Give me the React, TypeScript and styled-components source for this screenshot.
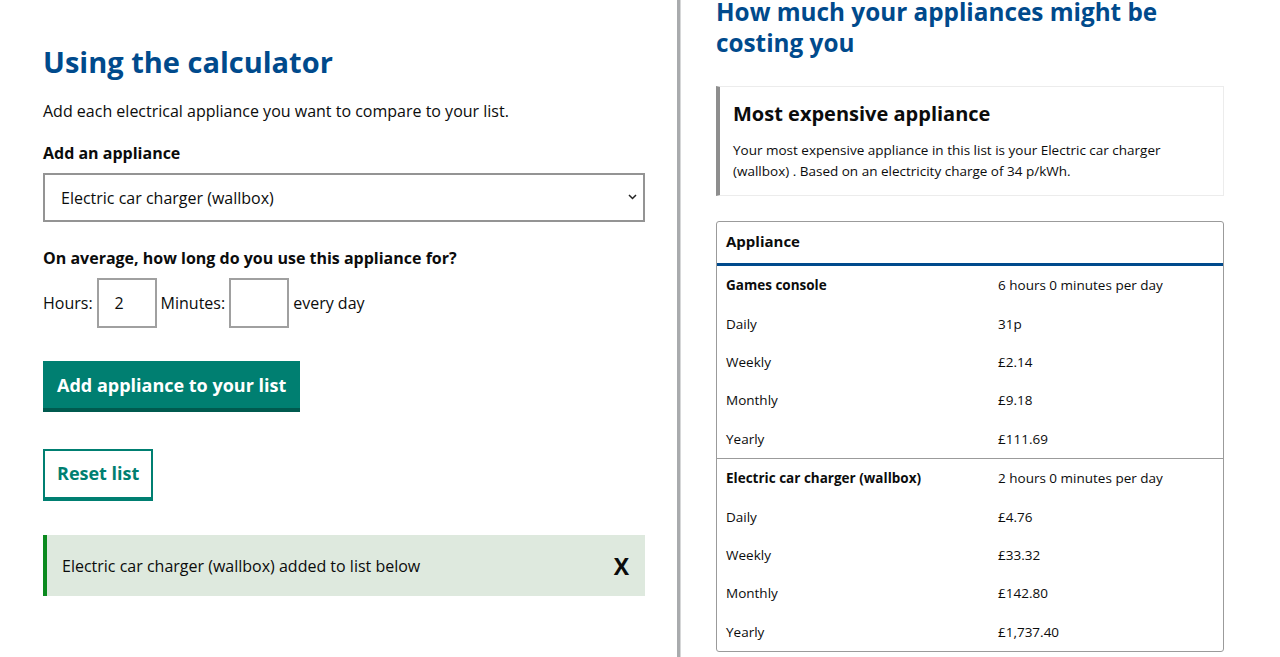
import React from "react";
import styled, { createGlobalStyle } from "styled-components";

const Global = createGlobalStyle`
  html, body { margin: 0; padding: 0; background: #fff; overflow: hidden; }
  body { font-family: "Open Sans", "Noto Sans", sans-serif; color: #0b0c0c; }
  * { box-sizing: border-box; }
`;

const Page = styled.div`
  display: grid;
  grid-template-columns: 680px 1fr;
  height: 657px;
`;

const LeftCol = styled.section`
  padding: 42px 35px 0 43px;
  border-right: 3px solid #a9abad;
  box-shadow: 1px 0 0 #d6d7d8;
`;

const RightCol = styled.section`
  padding: 0 56px 0 36px;
  margin-top: -4px;
`;

const H1 = styled.h1`
  margin: 0 0 17px;
  font-size: 29px;
  line-height: 40px;
  font-weight: 700;
  color: #004a8c;
`;

const H2 = styled.h2`
  margin: 0 0 28px;
  font-size: 24.3px;
  line-height: 31px;
  font-weight: 700;
  color: #004a8c;
`;

const P = styled.p`
  margin: 0 0 18px;
  font-size: 16px;
  line-height: 24px;
`;

const Label = styled.label`
  display: block;
  font-size: 16px;
  line-height: 24px;
  font-weight: 700;
  margin-bottom: 8px;
`;

const SelectBox = styled.div`
  position: relative;
  width: 602px;
  height: 49px;
  border: 2px solid #949494;
  display: flex;
  align-items: center;
  padding: 0 16px;
  font-size: 16px;
  margin-bottom: 24px;
`;

const Chevron = styled.svg`
  position: absolute;
  right: 6px;
  top: 50%;
  margin-top: -4px;
`;

const InputRow = styled.div`
  display: flex;
  align-items: center;
  gap: 4px;
  font-size: 16px;
  margin-bottom: 33px;
`;

const NumBox = styled.div`
  width: 60px;
  height: 50px;
  border: 2px solid #a0a0a0;
  display: flex;
  align-items: center;
  padding-left: 16px;
  font-size: 16px;
`;

const PrimaryButton = styled.button`
  display: block;
  height: 51px;
  padding: 0 14px 4px;
  border: none;
  background: #007f71;
  box-shadow: inset 0 -4px 0 #005a4f;
  color: #fff;
  font-family: inherit;
  font-size: 18px;
  font-weight: 700;
  margin-bottom: 37px;
`;

const SecondaryButton = styled.button`
  display: block;
  height: 52px;
  padding: 0 12px 2px;
  border: 2px solid #007f71;
  border-bottom-width: 4px;
  background: #fff;
  color: #007f71;
  font-family: inherit;
  font-size: 18px;
  font-weight: 700;
  margin-bottom: 34px;
`;

const Alert = styled.div`
  width: 602px;
  height: 61px;
  background: #dee9de;
  border-left: 4px solid #0b8a1f;
  display: flex;
  align-items: center;
  justify-content: space-between;
  padding: 0 16px 0 15px;
  font-size: 16px;
`;

const CloseX = styled.span`
  font-size: 23px;
  font-weight: 700;
`;

const Summary = styled.div`
  border: 1px solid #ececec;
  border-left: 4px solid #8e8e8e;
  padding: 12px 16px 13px 13px;
  margin-bottom: 25px;
`;

const H3 = styled.h3`
  margin: 0 0 11px;
  font-size: 20px;
  line-height: 30px;
  font-weight: 700;
`;

const SmallP = styled.p`
  margin: 0;
  font-size: 13.5px;
  line-height: 21px;
`;

const Table = styled.div`
  border: 1px solid #9b9b9b;
  border-radius: 3px;
`;

const HeadRow = styled.div`
  height: 44px;
  padding: 0 9px 3px;
  display: flex;
  align-items: center;
  border-bottom: 3px solid #004a8c;
  font-size: 15px;
  font-weight: 700;
`;

const Group = styled.div<{ $last?: boolean }>`
  border-bottom: ${(p) => (p.$last ? "none" : "1px solid #9b9b9b")};
`;

const Row = styled.div<{ $bold?: boolean }>`
  display: grid;
  grid-template-columns: 272px 1fr;
  height: 38.4px;
  align-items: center;
  padding: 0 9px;
  font-size: 13.5px;
  & > span:first-child {
    font-weight: ${(p) => (p.$bold ? 700 : 400)};
  }
`;

const groups = [
  {
    name: "Games console",
    usage: "6 hours 0 minutes per day",
    costs: ["31p", "£2.14", "£9.18", "£111.69"],
  },
  {
    name: "Electric car charger (wallbox)",
    usage: "2 hours 0 minutes per day",
    costs: ["£4.76", "£33.32", "£142.80", "£1,737.40"],
  },
];
const periods = ["Daily", "Weekly", "Monthly", "Yearly"];

export default function App() {
  return (
    <>
      <Global />
      <Page>
        <LeftCol>
          <H1>Using the calculator</H1>
          <P>Add each electrical appliance you want to compare to your list.</P>
          <Label>Add an appliance</Label>
          <SelectBox>
            Electric car charger (wallbox)
            <Chevron width="9" height="6" viewBox="0 0 9 6">
              <path d="M1 1l3.5 3.5L8 1" fill="none" stroke="#222" strokeWidth="1.5" />
            </Chevron>
          </SelectBox>
          <Label>On average, how long do you use this appliance for?</Label>
          <InputRow>
            <span>Hours:</span>
            <NumBox>2</NumBox>
            <span>Minutes:</span>
            <NumBox />
            <span>every day</span>
          </InputRow>
          <PrimaryButton>Add appliance to your list</PrimaryButton>
          <SecondaryButton>Reset list</SecondaryButton>
          <Alert>
            <span>Electric car charger (wallbox) added to list below</span>
            <CloseX>X</CloseX>
          </Alert>
        </LeftCol>
        <RightCol>
          <H2>
            How much your appliances might be
            <br />
            costing you
          </H2>
          <Summary>
            <H3>Most expensive appliance</H3>
            <SmallP>
              Your most expensive appliance in this list is your Electric car charger
              (wallbox) . Based on an electricity charge of 34 p/kWh.
            </SmallP>
          </Summary>
          <Table>
            <HeadRow>Appliance</HeadRow>
            {groups.map((g, gi) => (
              <Group key={g.name} $last={gi === groups.length - 1}>
                <Row $bold>
                  <span>{g.name}</span>
                  <span>{g.usage}</span>
                </Row>
                {periods.map((p, i) => (
                  <Row key={p}>
                    <span>{p}</span>
                    <span>{g.costs[i]}</span>
                  </Row>
                ))}
              </Group>
            ))}
          </Table>
        </RightCol>
      </Page>
    </>
  );
}
